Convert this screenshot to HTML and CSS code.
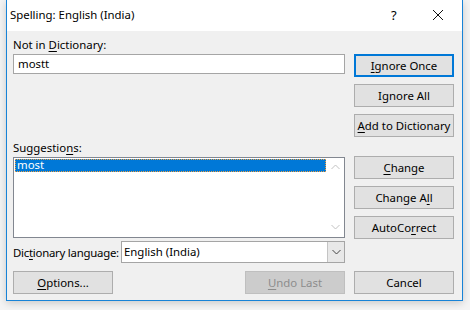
FILE: index.html
```html
<!DOCTYPE html>
<html lang="en">
<head>
    <meta charset="UTF-8">
    <title>Spelling: English (India)</title>
    <link rel="stylesheet" href="styles.css">
</head>
<body>
    <div class="window">
        <div class="titlebar">
            <span class="title">Spelling: English (India)</span>
            <span class="help">?</span>
            <span class="close">
                <svg width="12" height="12" viewBox="0 0 12 12"><path d="M1 1L11 11M11 1L1 11" stroke="#111" stroke-width="1" fill="none"/></svg>
            </span>
        </div>

        <div class="content">
            <div class="left">
                <div class="label">Not in <u>D</u>ictionary:</div>
                <div class="textbox">mostt</div>

                <div class="label suggest-label">Suggestio<u>n</u>s:</div>
                <div class="listbox">
                    <div class="items">
                        <div class="item selected">most</div>
                    </div>
                    <div class="scrollbar">
                        <svg width="9" height="6" viewBox="0 0 9 6"><path d="M0.5 5L4.5 1L8.5 5" stroke="#c2c2c2" fill="none"/></svg>
                        <svg width="9" height="6" viewBox="0 0 9 6"><path d="M0.5 1L4.5 5L8.5 1" stroke="#c2c2c2" fill="none"/></svg>
                    </div>
                </div>

                <div class="lang-row">
                    <span class="lang-label">Dic<u>t</u>ionary language:</span>
                    <div class="combo">
                        <span class="combo-text">English (India)</span>
                        <span class="combo-arrow">
                            <svg width="9" height="6" viewBox="0 0 9 6"><path d="M0.5 1L4.5 5L8.5 1" stroke="#444" fill="none"/></svg>
                        </span>
                    </div>
                </div>

                <div class="bottom-row">
                    <button class="btn"><u>O</u>ptions...</button>
                    <button class="btn disabled"><u>U</u>ndo Last</button>
                </div>
            </div>

            <div class="right">
                <button class="btn focused"><u>I</u>gnore Once</button>
                <button class="btn">I<u>g</u>nore All</button>
                <button class="btn"><u>A</u>dd to Dictionary</button>
                <button class="btn group"><u>C</u>hange</button>
                <button class="btn">Change A<u>l</u>l</button>
                <button class="btn">AutoCo<u>r</u>rect</button>
                <button class="btn cancel">Cancel</button>
            </div>
        </div>
    </div>
</body>
</html>
```

FILE: styles.css
```css
* {
    margin: 0;
    padding: 0;
    box-sizing: border-box;
    font-family: "Noto Sans", "Open Sans", sans-serif;
}

body {
    background-color: #f4f4f4;
    width: 470px;
    height: 310px;
    overflow: hidden;
    font-size: 11.4px;
    color: #000;
}

u {
    text-decoration: underline;
    text-underline-offset: 2px;
}

.window {
    margin-left: 6px;
    width: 457px;
    height: 301px;
    border: 1px solid #1883d7;
    border-top: none;
    background-color: #f0f0f0;
    box-shadow: 0 2px 8px rgba(0, 0, 0, 0.18);
}

.titlebar {
    height: 31px;
    background-color: #fff;
    display: flex;
    align-items: center;
    padding-left: 3px;
}

.title {
    flex: 1;
    font-size: 11.4px;
    padding-bottom: 2px;
}

.help {
    width: 14px;
    margin-right: 27px;
    font-size: 13px;
    padding-bottom: 2px;
}

.close {
    width: 12px;
    height: 12px;
    margin-right: 18px;
    margin-bottom: 2px;
    display: flex;
}

.content {
    display: flex;
    gap: 9px;
    padding: 6px 7px 0 6px;
}

.left {
    width: 332px;
    display: flex;
    flex-direction: column;
}

.label {
    height: 16px;
    line-height: 16px;
    margin-bottom: 1px;
}

.textbox {
    height: 20px;
    border: 1px solid #a5a5a5;
    background-color: #fff;
    padding-left: 4px;
    line-height: 17px;
}

.suggest-label {
    margin-top: 66px;
}

.listbox {
    height: 81px;
    border: 1px solid #828790;
    background-color: #fff;
    display: flex;
}

.items {
    flex: 1;
    padding: 1px 0 0 1px;
}

.item {
    height: 13px;
    line-height: 12px;
    padding-left: 2px;
}

.selected {
    background-color: #0078d7;
    color: #fff;
    outline: 1px dotted #f0a040;
    outline-offset: -1px;
}

.scrollbar {
    width: 18px;
    display: flex;
    flex-direction: column;
    justify-content: space-between;
    align-items: center;
    padding: 6px 0 7px 0;
}

.lang-row {
    display: flex;
    align-items: center;
    justify-content: space-between;
    margin-top: 3px;
    height: 22px;
}

.lang-label {
    white-space: nowrap;
    letter-spacing: -0.25px;
}

.combo {
    width: 224px;
    height: 22px;
    border: 1px solid #a5a5a5;
    background-color: #fff;
    display: flex;
}

.combo-text {
    flex: 1;
    padding-left: 2px;
    line-height: 19px;
}

.combo-arrow {
    width: 17px;
    background-color: #e8e8e8;
    border-left: 1px solid #c4c4c4;
    display: flex;
    align-items: center;
    justify-content: center;
}

.bottom-row {
    display: flex;
    justify-content: space-between;
    margin-top: 8px;
}

.bottom-row .btn {
    width: 100px;
}

.right {
    width: 100px;
    display: flex;
    flex-direction: column;
    padding-top: 17px;
}

.btn {
    width: 100px;
    height: 23px;
    border: 1px solid #adadad;
    background-color: #e1e1e1;
    font-size: 11.4px;
    color: #000;
    margin-bottom: 7px;
    padding-bottom: 1px;
}

.focused {
    border: 2px solid #0078d7;
}

.group {
    margin-top: 12px;
}

.cancel {
    margin-top: 25px;
}

.disabled {
    background-color: #cccccc;
    border-color: #bfbfbf;
    color: #8c8c8c;
}
```
